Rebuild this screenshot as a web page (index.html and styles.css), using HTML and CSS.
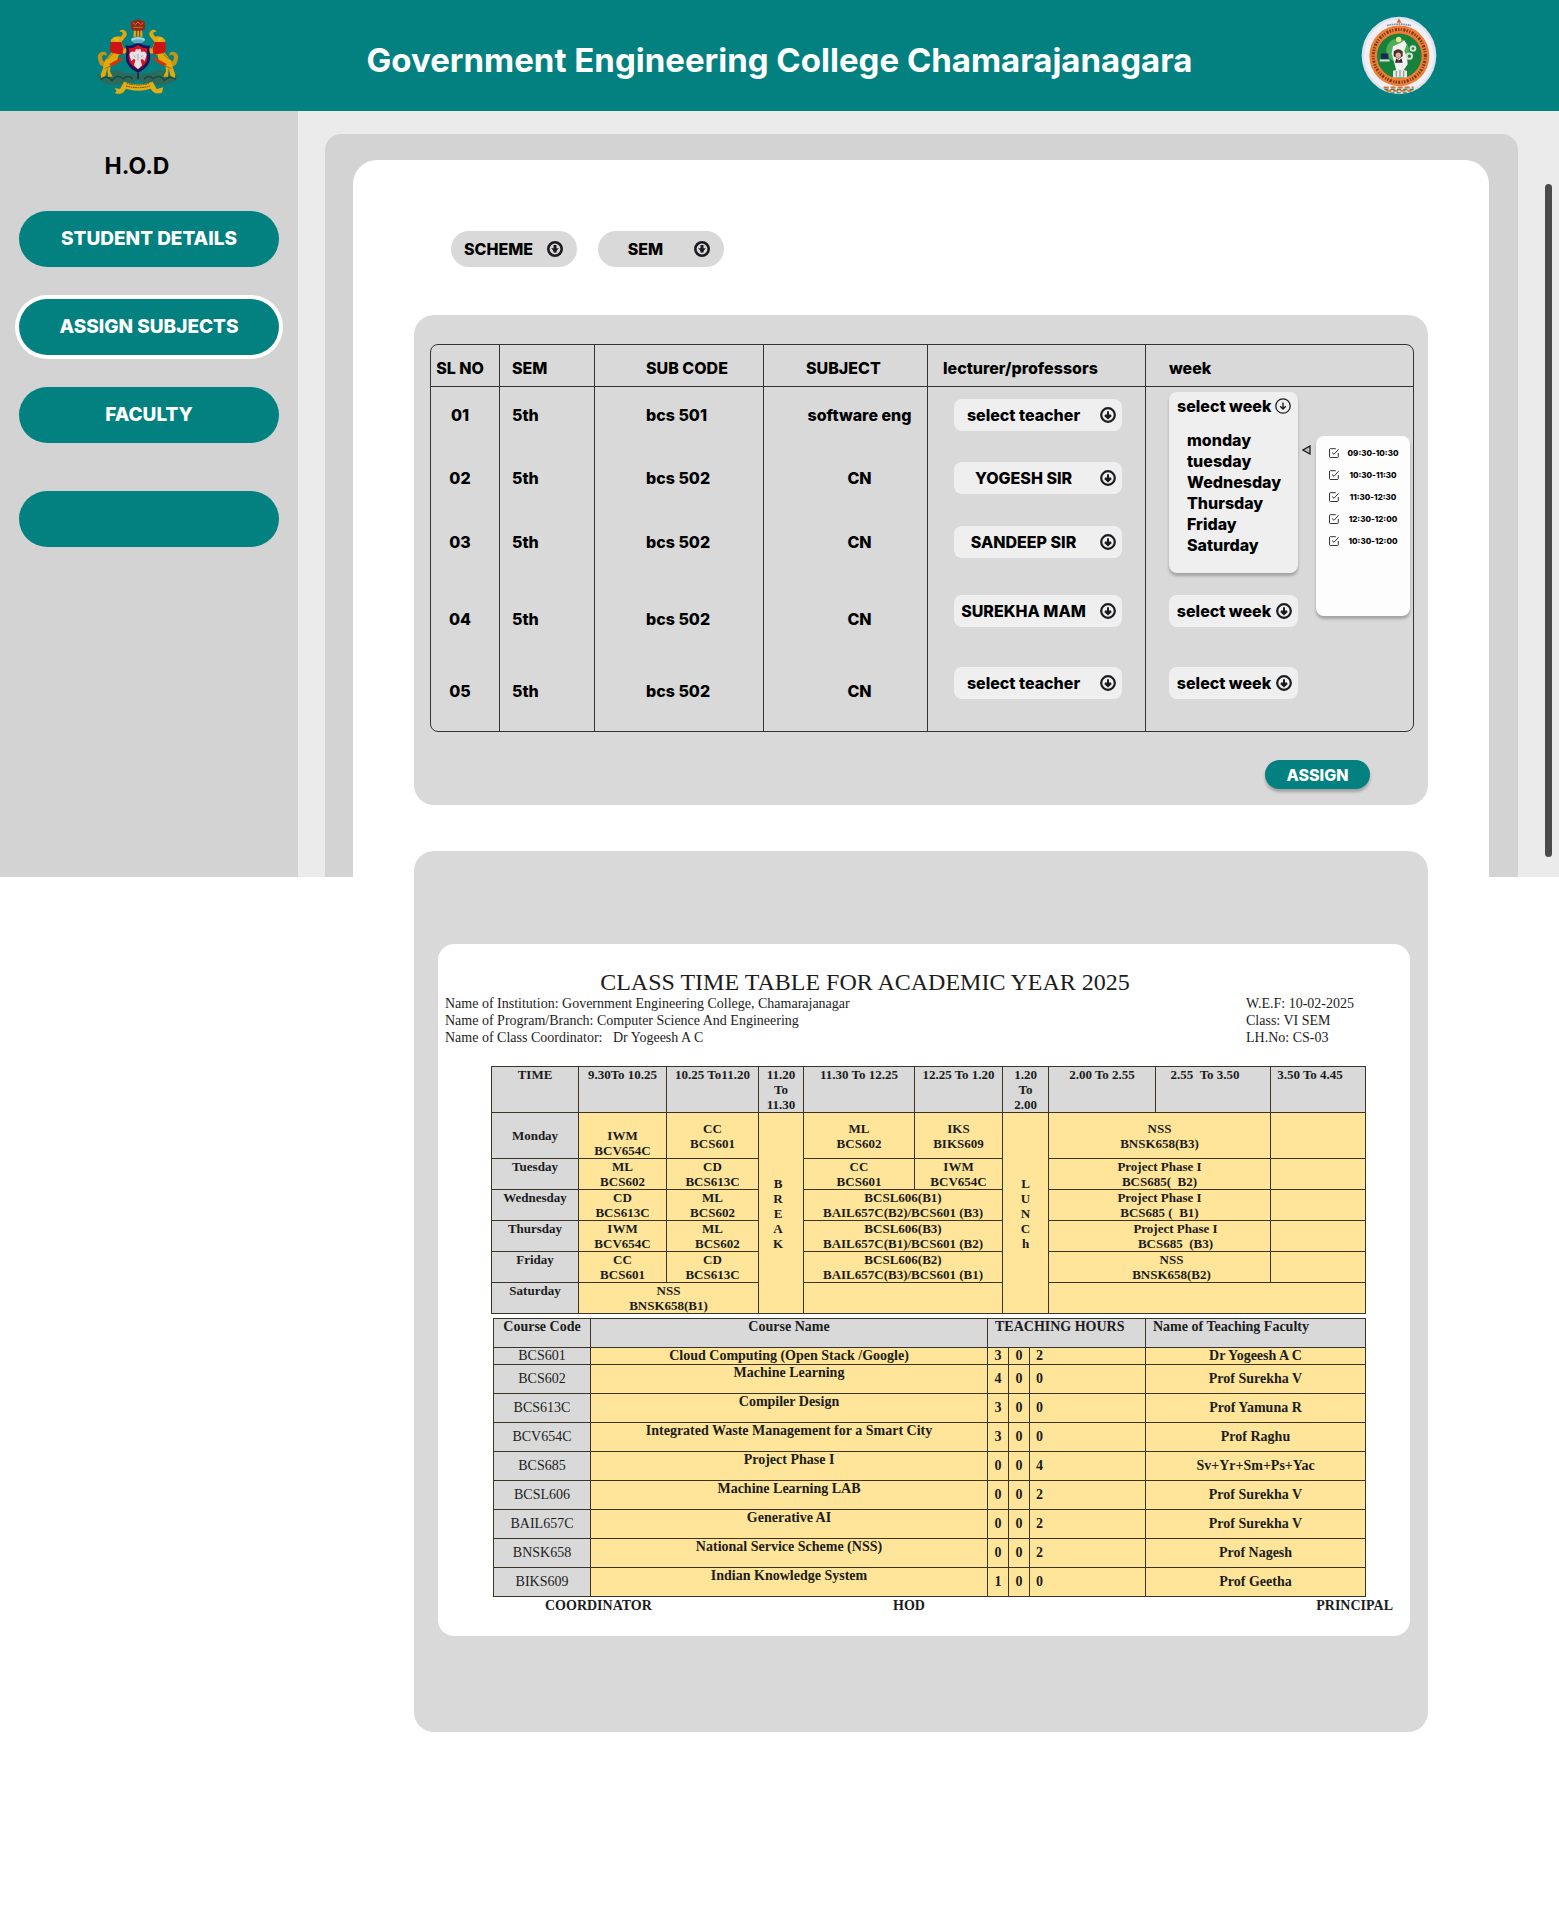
FILE: index.html
```html
<!DOCTYPE html>
<html lang="en">
<head>
<meta charset="utf-8">
<meta name="viewport" content="width=device-width, initial-scale=1">
<title>Government Engineering College Chamarajanagara</title>
<link rel="stylesheet" href="styles.css">
</head>
<body>
<svg class="sprite" aria-hidden="true">
  <symbol id="down-bold" viewBox="0 0 16 16">
    <circle cx="8" cy="8" r="6.8" fill="none" stroke="#1d1b20" stroke-width="2.2"/>
    <path d="M8 4.2v7M4.9 8.2 8 11.2l3.1-3" fill="none" stroke="#1d1b20" stroke-width="2"/>
    <path d="M5 7.6h6L8 11z" fill="#1d1b20"/>
  </symbol>
  <symbol id="down-heavy" viewBox="0 0 16 16">
    <circle cx="8" cy="8" r="6.7" fill="none" stroke="#1d1b20" stroke-width="2.6"/>
    <path d="M8 4v7.5" fill="none" stroke="#1d1b20" stroke-width="3"/>
    <path d="M4.2 7.2h7.6L8 11.8z" fill="#1d1b20"/>
  </symbol>
  <symbol id="down-light" viewBox="0 0 16 16">
    <circle cx="8" cy="8" r="7.2" fill="none" stroke="#1d1b20" stroke-width="1.3"/>
    <path d="M8 4.6v6.4M5.2 8.3 8 11.1l2.8-2.8" fill="none" stroke="#1d1b20" stroke-width="1.4"/>
  </symbol>
  <symbol id="check" viewBox="0 0 10 10">
    <path d="M9.3 5v3.6a.9.9 0 0 1-.9.9H1.4a.9.9 0 0 1-.9-.9V1.6A.9.9 0 0 1 1.4.7h5.4M3 4.5 5 6.3 9.6 1.2" fill="none" stroke="#1d1b20" stroke-width=".9"/>
  </symbol>
</svg>

<header class="topbar">
  <svg class="emblem" viewBox="48 50 252 232" role="img" aria-label="State emblem">
    <path d="M50 222q10 28 48 30 40 4 76-14 38 18 76 14 38-4 48-28-22 6-32-4-14-14-34-10-30 14-58 6-32 6-58-6-20-4-34 10-12 8-32 2z" fill="#2c6a5c"/>
    <path d="M62 236q20-14 34 4 14-22 34-6 16-14 28 2M288 236q-20-14-34 4-14-22-34-6-16-14-28 2" fill="none" stroke="#17493f" stroke-width="4"/>
    <g id="beast">
      <path d="M78 198q-18 2-22-16-8-20 8-28 18-4 16 12-10-8-14 2 0 14 12 18z" fill="#c99416"/>
      <path d="M92 118q16-14 30-10 10-8 4-14-6-2-8 2 2-12 14-8 16 10 2 24-6 8-10 12l8 20 16-6 6 10-18 10-20 4-4 16-20 12-2 22 8 16H84l-2-26-6 24-12 6-2-10 8-22 4-20 14-16 10-12z" fill="#e3a80e"/>
      <path d="M92 124h32l6 20-2 18-28-4-10-6z" fill="#ce1410"/>
      <path d="M88 190l38-20 2 8-34 20z" fill="#d4330f"/>
      <path d="M98 112l8-4 10 8-4 8z" fill="#f2b51a"/>
      <path d="M78 176q16-8 20-18M74 204l22-10" fill="none" stroke="#8f6410" stroke-width="2.5"/>
    </g>
    <use href="#beast" transform="matrix(-1 0 0 1 348 0)"/>
    <path d="M136 134q20 4 38-10 18 14 36 10-4 16 0 30 4 34-36 52-40-18-36-52 4-14-2-30z" fill="#1c135f"/>
    <path d="M146 143q16 0 28-9 12 9 28 9-3 12 0 26 1 22-28 37-29-15-28-37 3-14 0-26z" fill="#d51426"/>
    <path d="M168 146q6-6 6 6 0-12 8-6l2 8q12-6 16 8l-6 20-8-8-4 4 4 16-12 12-12-12 4-16-4-4-8 8-6-20q4-14 16-8z" fill="#e5e1e4"/>
    <path d="M174 160v20M162 164l3 6M188 164l-4 6" stroke="#8d8790" stroke-width="2"/>
    <ellipse cx="174" cy="117" rx="21" ry="8" fill="#9fd3e4"/>
    <ellipse cx="174" cy="122" rx="16" ry="6" fill="#5eaec8"/>
    <path d="M162 84h24l2 24h-28z" fill="#d9a320"/>
    <path d="M152 66q4-8 12-6 10-8 20 0 10-2 11 6v20q-8 6-20 4-12 2-21-4z" fill="#93271c"/>
    <path d="M158 66l8 6 8-8 8 8 8-6M160 80h28" fill="none" stroke="#d08024" stroke-width="2.5"/>
    <path d="M170 84v24M179 84v24" stroke="#70401a" stroke-width="3"/>
    <path d="M174 216v20" stroke="#1c135f" stroke-width="4"/>
    <path d="M104 262l16 3 12-22q42 16 86 0l12 22 20-5-4 16q-24 8-34-12-38 12-74 0-12 22-34 13l6-5z" fill="#e2ae15"/>
    <path d="M140 248q34 10 68 0M138 256q36 10 72 0" fill="none" stroke="#6f4c0c" stroke-width="3" stroke-dasharray="5 2"/>
  </svg>
  <h1 class="title">Government Engineering College Chamarajanagara</h1>
  <svg class="seal" viewBox="64 48 228 236" role="img" aria-label="University seal">
    <ellipse cx="178" cy="166" rx="112" ry="116" fill="#dfe2ec"/>
    <ellipse cx="178" cy="166" rx="105" ry="109" fill="#eef0f5"/>
    <path d="M132 262h90M140 272h76" stroke="#df6b38" stroke-width="6" stroke-dasharray="15 6"/>
    <path d="M134 268h88M152 278h54" stroke="#37884c" stroke-width="4" stroke-dasharray="12 7"/>
    <path d="M142 76q36-8 72 0" fill="none" stroke="#858899" stroke-width="5" stroke-dasharray="5 2"/>
    <path d="M178 54l7 14h-14z" fill="#e2641e"/>
    <ellipse cx="179" cy="167" rx="90" ry="91" fill="#ef7d35"/>
    <ellipse cx="179" cy="167" rx="78" ry="79" fill="none" stroke="#6b3a1f" stroke-width="9" stroke-dasharray="4 4 3 5 6 4"/>
    <circle cx="179" cy="167" r="67" fill="#17823b"/>
    <circle cx="174" cy="150" r="34" fill="#4fae5b"/>
    <circle cx="177" cy="118" r="8" fill="#eee58b"/>
    <path d="M160 138l24-10 10-8 7 14-7 18 8 20 2 20-16 24-18-4-8-30-6-22z" fill="#f1f2ee"/>
    <g fill="none" stroke="#d9ded8"><circle cx="220" cy="145" r="7" stroke-width="6"/><circle cx="209" cy="168" r="8" stroke-width="6"/></g>
    <path d="M124 160h22v16h-22z" fill="#1b2559"/><path d="M120 178h30v6h-30z" fill="#dddddd"/>
    <path d="M162 154q14-14 27 0v14l-12 8-15-8z" fill="#45302d"/>
    <circle cx="176" cy="165" r="8" fill="#e6ad93"/>
    <path d="M166 188l4-14 7 8 8-8 4 14z" fill="#23263c"/>
    <path d="M176 178v10" stroke="#c62727" stroke-width="4"/>
    <path d="M160 212l20-5 22 5v20h-42z" fill="#e6e8e5"/><path d="M170 212v18M181 210v20M192 212v18" stroke="#838b85" stroke-width="3"/>
  </svg>
</header>

<div class="shell">
  <nav class="sidebar" aria-label="Main">
    <h2 class="role">H.O.D</h2>
    <button class="nav-button" type="button">STUDENT DETAILS</button>
    <button class="nav-button nav-active" type="button">ASSIGN SUBJECTS</button>
    <button class="nav-button" type="button">FACULTY</button>
    <button class="nav-button nav-spare" type="button" aria-label="Spare"></button>
  </nav>

  <main class="main">
    <div class="frame">
      <div class="sheet">
        <div class="filters">
          <div class="picker pill"><select aria-label="Scheme"><option>SCHEME</option></select><svg class="arrow"><use href="#down-heavy"/></svg></div>
          <div class="picker pill"><select aria-label="Semester"><option>SEM</option></select><svg class="arrow"><use href="#down-heavy"/></svg></div>
        </div>

        <section class="panel assign-panel">
          <div class="grid-box">
            <table class="subjects">
              <colgroup><col class="w-no"><col class="w-sem"><col class="w-code"><col class="w-subject"><col class="w-teacher"><col></colgroup>
              <thead>
                <tr><th class="no">SL NO</th><th class="sem">SEM</th><th class="code">SUB CODE</th><th class="subject">SUBJECT</th><th class="teacher">lecturer/professors</th><th class="week">week</th></tr>
              </thead>
              <tbody>
                <tr class="first">
                  <td class="no">01</td><td class="sem">5th</td><td class="code">bcs 501</td><td class="subject">software eng</td>
                  <td class="teacher"><div class="picker"><select aria-label="Teacher 01"><option>select teacher</option></select><svg class="arrow"><use href="#down-bold"/></svg></div></td>
                  <td class="week open">
                    <div class="menu">
                      <button class="menu-head" type="button" aria-expanded="true">select week<svg class="menu-arrow"><use href="#down-light"/></svg></button>
                      <ul class="days"><li>monday</li><li>tuesday</li><li>Wednesday</li><li>Thursday</li><li>Friday</li><li>Saturday</li></ul>
                    </div>
                    <svg class="pointer" viewBox="0 0 9 10"><path d="M8 1v8L1 5z" fill="#bbb" stroke="#1d1b20" stroke-width="1.3"/></svg>
                    <div class="slots">
                      <label class="slot"><input type="checkbox" checked><svg><use href="#check"/></svg><span>09:30-10:30</span></label>
                      <label class="slot"><input type="checkbox" checked><svg><use href="#check"/></svg><span>10:30-11:30</span></label>
                      <label class="slot"><input type="checkbox" checked><svg><use href="#check"/></svg><span>11:30-12:30</span></label>
                      <label class="slot"><input type="checkbox" checked><svg><use href="#check"/></svg><span>12:30-12:00</span></label>
                      <label class="slot"><input type="checkbox" checked><svg><use href="#check"/></svg><span>10:30-12:00</span></label>
                    </div>
                  </td>
                </tr>
                <tr class="mid">
                  <td class="no">02</td><td class="sem">5th</td><td class="code">bcs 502</td><td class="subject">CN</td>
                  <td class="teacher"><div class="picker"><select aria-label="Teacher 02"><option>YOGESH SIR</option></select><svg class="arrow"><use href="#down-bold"/></svg></div></td><td class="week"></td>
                </tr>
                <tr class="mid">
                  <td class="no">03</td><td class="sem">5th</td><td class="code">bcs 502</td><td class="subject">CN</td>
                  <td class="teacher"><div class="picker"><select aria-label="Teacher 03"><option>SANDEEP SIR</option></select><svg class="arrow"><use href="#down-bold"/></svg></div></td><td class="week"></td>
                </tr>
                <tr class="tall">
                  <td class="no">04</td><td class="sem">5th</td><td class="code">bcs 502</td><td class="subject">CN</td>
                  <td class="teacher"><div class="picker"><select aria-label="Teacher 04"><option>SUREKHA MAM</option></select><svg class="arrow"><use href="#down-bold"/></svg></div></td>
                  <td class="week"><div class="picker narrow"><select aria-label="Week 04"><option>select week</option></select><svg class="arrow"><use href="#down-bold"/></svg></div></td>
                </tr>
                <tr class="tall last">
                  <td class="no">05</td><td class="sem">5th</td><td class="code">bcs 502</td><td class="subject">CN</td>
                  <td class="teacher"><div class="picker"><select aria-label="Teacher 05"><option>select teacher</option></select><svg class="arrow"><use href="#down-bold"/></svg></div></td>
                  <td class="week"><div class="picker narrow"><select aria-label="Week 05"><option>select week</option></select><svg class="arrow"><use href="#down-bold"/></svg></div></td>
                </tr>
              </tbody>
            </table>
          </div>
          <button class="assign" type="button">ASSIGN</button>
        </section>
      </div>
    </div>
    <div class="scrollbar"></div>
  </main>
</div>

<section class="panel timetable-panel">
  <article class="paper">
    <h2 class="paper-title">CLASS TIME TABLE FOR ACADEMIC YEAR 2025</h2>
    <div class="details">
      <p>Name of Institution: Government Engineering College, Chamarajanagar<br>Name of Program/Branch: Computer Science And Engineering<br>Name of Class Coordinator: &nbsp; Dr Yogeesh A C</p>
      <p>W.E.F: 10-02-2025<br>Class: VI SEM<br>LH.No: CS-03</p>
    </div>
    <div class="tables">
      <table class="timetable">
        <colgroup><col class="t1"><col class="t2"><col class="t3"><col class="t4"><col class="t5"><col class="t6"><col class="t7"><col class="t8"><col class="t9"><col class="t10"></colgroup>
        <thead>
          <tr><th>TIME</th><th>9.30To 10.25</th><th>10.25 To11.20</th><th>11.20<br>To<br>11.30</th><th>11.30 To 12.25</th><th>12.25 To 1.20</th><th>1.20<br>To<br>2.00</th><th>2.00 To 2.55</th><th class="pull">2.55 &nbsp;To 3.50</th><th class="pull">3.50 To 4.45</th></tr>
        </thead>
        <tbody>
          <tr class="monday"><th>Monday</th><td class="low">IWM<br>BCV654C</td><td>CC<br>BCS601</td><td class="break" rowspan="6">B<br>R<br>E<br>A<br>K</td><td>ML<br>BCS602</td><td>IKS<br>BIKS609</td><td rowspan="6">L<br>U<br>N<br>C<br>h</td><td colspan="2">NSS<br>BNSK658(B3)</td><td></td></tr>
          <tr><th>Tuesday</th><td>ML<br>BCS602</td><td>CD<br>BCS613C</td><td>CC<br>BCS601</td><td>IWM<br>BCV654C</td><td colspan="2">Project Phase I<br>BCS685( &nbsp;B2)</td><td></td></tr>
          <tr><th>Wednesday</th><td>CD<br>BCS613C</td><td>ML<br>BCS602</td><td colspan="2">BCSL606(B1)<br>BAIL657C(B2)/BCS601 (B3)</td><td colspan="2">Project Phase I<br>BCS685 ( &nbsp;B1)</td><td></td></tr>
          <tr><th>Thursday</th><td>IWM<br>BCV654C</td><td>ML<br>&nbsp; &nbsp;BCS602</td><td colspan="2">BCSL606(B3)<br>BAIL657C(B1)/BCS601 (B2)</td><td class="push" colspan="2">Project Phase I<br>BCS685 &nbsp;(B3)</td><td></td></tr>
          <tr><th>Friday</th><td>CC<br>BCS601</td><td>CD<br>BCS613C</td><td colspan="2">BCSL606(B2)<br>BAIL657C(B3)/BCS601 (B1)</td><td class="nudge" colspan="2">NSS<br>BNSK658(B2)</td><td></td></tr>
          <tr><th>Saturday</th><td colspan="2">NSS<br>BNSK658(B1)</td><td colspan="2"></td><td colspan="3"></td></tr>
        </tbody>
      </table>

      <table class="courses">
        <colgroup><col class="c1"><col class="c2"><col class="c3"><col class="c3"><col class="c5"><col class="c6"></colgroup>
        <thead>
          <tr><th>Course Code</th><th>Course Name</th><th class="start" colspan="3">TEACHING HOURS</th><th class="start">Name of Teaching Faculty</th></tr>
        </thead>
        <tbody>
          <tr class="short"><td>BCS601</td><td>Cloud Computing (Open Stack /Google)</td><td>3</td><td>0</td><td>2</td><td>Dr Yogeesh A C</td></tr>
          <tr><td>BCS602</td><td>Machine Learning</td><td>4</td><td>0</td><td>0</td><td>Prof Surekha V</td></tr>
          <tr><td>BCS613C</td><td>Compiler Design</td><td>3</td><td>0</td><td>0</td><td>Prof Yamuna R</td></tr>
          <tr><td>BCV654C</td><td>Integrated Waste Management for a Smart City</td><td>3</td><td>0</td><td>0</td><td>Prof Raghu</td></tr>
          <tr><td>BCS685</td><td>Project Phase I</td><td>0</td><td>0</td><td>4</td><td>Sv+Yr+Sm+Ps+Yac</td></tr>
          <tr><td>BCSL606</td><td>Machine Learning LAB</td><td>0</td><td>0</td><td>2</td><td>Prof Surekha V</td></tr>
          <tr><td>BAIL657C</td><td>Generative AI</td><td>0</td><td>0</td><td>2</td><td>Prof Surekha V</td></tr>
          <tr><td>BNSK658</td><td>National Service Scheme (NSS)</td><td>0</td><td>0</td><td>2</td><td>Prof Nagesh</td></tr>
          <tr><td>BIKS609</td><td>Indian Knowledge System</td><td>1</td><td>0</td><td>0</td><td>Prof Geetha</td></tr>
        </tbody>
      </table>
    </div>
    <footer class="signatures"><span>COORDINATOR</span><span>HOD</span><span>PRINCIPAL</span></footer>
  </article>
</section>
</body>
</html>
```
FILE: styles.css
```css
*, *::before, *::after { box-sizing: border-box; }

body {
  margin: 0;
  background: #fff;
  color: #000;
  font-family: Inter, "Liberation Sans", sans-serif;
  font-size: 16px;
  font-weight: 800;
  line-height: 20px;
}

h1, h2, p, ul { margin: 0; padding: 0; }
th { font-weight: inherit; }
button, select { border: 0; margin: 0; font: inherit; color: inherit; }
.sprite { display: none; }

/* Top bar */
.topbar {
  display: grid;
  grid-template-columns: 1fr auto 1fr;
  align-items: center;
  min-height: 111px;
  padding: 0 122px 0 96px;
  background: #038080;
}
.emblem { width: 84px; height: 78px; }
.seal { width: 76px; height: 79px; justify-self: end; }
.title {
  padding: 8px 0 0 26px;
  color: #fff;
  font-size: 33px;
  font-weight: 700;
  line-height: 40px;
  text-align: center;
}

/* Shell */
.shell { display: flex; background: #ebebeb; }
.sidebar {
  display: flex;
  flex-direction: column;
  flex: 0 0 298px;
  gap: 32px;
  padding: 40px 19px;
  background: #d3d3d3;
}
.role {
  margin-bottom: -2px;
  padding-right: 24px;
  font-size: 23px;
  font-weight: 700;
  line-height: 30px;
  text-align: center;
}
.nav-button {
  height: 56px;
  border-radius: 28px;
  background: #038080;
  color: #fff;
  font-size: 19px;
}
.nav-active { box-shadow: 0 0 0 4px #fff; }
.nav-spare { margin-top: 16px; }

.main { display: flex; flex: 1; gap: 27px; padding: 23px 7px 0 27px; }
.frame {
  flex: 1;
  padding: 26px 29px 0 28px;
  border-radius: 16px 16px 0 0;
  background: #d3d3d3;
}
.sheet {
  padding: 71px 61px 72px;
  border-radius: 24px 24px 0 0;
  background: #fff;
}
.scrollbar {
  flex: 0 0 7px;
  margin: 50px 0 20px;
  border-radius: 4px;
  background: #4a4a4a;
}

/* Pickers */
.picker { position: relative; width: 168px; height: 32px; }
.picker select {
  appearance: none;
  width: 100%;
  height: 100%;
  padding: 0 29px 0 0;
  border-radius: 8px;
  background: #efefef;
  text-align: center;
  text-align-last: center;
}
.arrow {
  position: absolute;
  top: 50%;
  right: 6px;
  width: 16px;
  height: 16px;
  margin-top: -8px;
  pointer-events: none;
}
.narrow { width: 129px; }
.narrow select { padding: 0 19px 0 0; }
.filters { display: flex; gap: 21px; padding-left: 37px; }
.pill { width: 126px; height: 36px; }
.pill select { padding-right: 31px; border-radius: 18px; background: #d9d9d9; }
.pill .arrow { right: 14px; }

/* Assignment panel */
.panel { border-radius: 20px; background: #d9d9d9; }
.assign-panel {
  display: flex;
  flex-direction: column;
  margin-top: 48px;
  padding: 29px 14px 16px 16px;
}
.grid-box { border: 1px solid #333; border-radius: 8px; }
.subjects {
  width: 100%;
  table-layout: fixed;
  border-spacing: 0;
  text-align: left;
}
.subjects th, .subjects td { padding: 0; white-space: nowrap; }
.subjects th { height: 42px; padding-top: 4px; border-bottom: 1px solid #333; }
.subjects th + th, .subjects td + td { border-left: 1px solid #333; }
.w-no { width: 68px; }
.w-sem { width: 95px; }
.w-code { width: 169px; }
.w-subject { width: 164px; }
.w-teacher { width: 218px; }
.subjects .no { padding-right: 10px; text-align: center; }
.subjects .sem { padding-left: 12px; }
.subjects .code { padding-left: 51px; }
.subjects th.subject { padding-left: 42px; }
.subjects td.subject { padding-left: 28px; text-align: center; }
.subjects th.teacher { padding-left: 15px; }
.subjects td.teacher { padding-left: 26px; }
.subjects .week { padding-left: 23px; }
.subjects .first td { height: 59px; padding-bottom: 4px; }
.mid td { height: 64px; }
.subjects .tall td { height: 72px; padding-top: 35px; vertical-align: top; }
.subjects .tall .teacher, .subjects .tall .week { padding-top: 21px; }
.subjects .last td { height: 85px; }

.open { position: relative; }
.menu, .slots {
  position: absolute;
  z-index: 1;
  border-radius: 8px;
  box-shadow: 0 3px 3px rgba(0, 0, 0, .25);
}
.menu { top: 5px; width: 129px; min-height: 181px; background: #efefef; }
.menu-head {
  display: flex;
  align-items: center;
  gap: 4px;
  width: 100%;
  height: 28px;
  padding: 0 0 0 8px;
  background: none;
}
.menu-arrow { width: 16px; height: 16px; }
.days { padding: 10px 0 0 18px; line-height: 21px; list-style: none; }
.pointer { position: absolute; top: 58px; left: 156px; width: 9px; height: 10px; }
.slots {
  top: 49px;
  left: 170px;
  width: 94px;
  min-height: 180px;
  padding: 6px 10px 0 13px;
  background: #fdfdfd;
}
.slot {
  display: grid;
  grid-template-columns: 10px 1fr;
  align-items: center;
  column-gap: 7px;
  height: 22px;
  font-size: 8px;
  text-align: center;
}
.slot input, .slot svg { grid-area: 1 / 1; width: 10px; height: 10px; margin: 0; }
.slot input { opacity: 0; }

.assign {
  align-self: flex-end;
  width: 105px;
  height: 29px;
  margin: 28px 44px 0 0;
  border-radius: 15px;
  background: #038080;
  color: #fff;
  box-shadow: 0 3px 3px rgba(0, 0, 0, .25);
}

/* Timetable */
.timetable-panel {
  position: relative;
  margin: -26px 131px 188px 414px;
  padding: 93px 18px 96px 24px;
}
.paper {
  padding: 26px 0 21px;
  border-radius: 16px;
  background: #fff;
  color: #1c1c1c;
  font-family: "Liberation Serif", serif;
  font-weight: 700;
}
.paper-title {
  padding-right: 118px;
  font-size: 24px;
  font-weight: 400;
  line-height: 24px;
  text-align: center;
}
.details {
  display: flex;
  justify-content: space-between;
  padding: 1px 56px 0 7px;
  font-size: 14px;
  font-weight: 400;
  line-height: 17px;
}
.tables { padding: 20px 45px 0 53px; }
.tables table { width: 100%; table-layout: fixed; border-collapse: collapse; }
.tables th, .tables td { padding: 0; border: 1px solid #3b3427; white-space: nowrap; }
.tables th { background: #d9d9d9; vertical-align: top; }
.tables td { background: #ffe599; text-align: center; }

.timetable { font-size: 13px; line-height: 15px; }
.t1 { width: 87px; }
.t2 { width: 88px; }
.t3 { width: 92px; }
.t4 { width: 45px; }
.t5 { width: 111px; }
.t6 { width: 88px; }
.t7 { width: 46px; }
.t8 { width: 107px; }
.t9 { width: 115px; }
.t10 { width: 95px; }
.timetable .pull { padding-right: 16px; }
.timetable .push { padding-left: 32px; }
.timetable .nudge { padding-left: 24px; }
.timetable .break { padding-right: 6px; }
.monday > * { height: 46px; }
.timetable .monday th { vertical-align: middle; }
.timetable .low { vertical-align: bottom; }

.tables .courses {
  width: calc(100% - 2px);
  margin: 4px 0 0 2px;
  font-size: 14px;
  line-height: 16px;
}
.courses th { height: 29px; }
.courses td { height: 29px; }
.courses .short td { height: 17px; }
.c1 { width: 97px; }
.c2 { width: 397px; }
.c3 { width: 21px; }
.c5 { width: 116px; }
.c6 { width: 220px; }
.courses .start { padding-left: 7px; text-align: left; }
.courses td:nth-child(1) { background: #d9d9d9; font-weight: 400; }
.courses td:nth-child(2) { vertical-align: top; }
.courses td:nth-child(5) { padding-left: 6px; text-align: left; }

.signatures {
  display: grid;
  grid-template-columns: 348px 1fr auto;
  padding: 0 17px 0 107px;
  font-size: 14px;
  line-height: 18px;
}
```
